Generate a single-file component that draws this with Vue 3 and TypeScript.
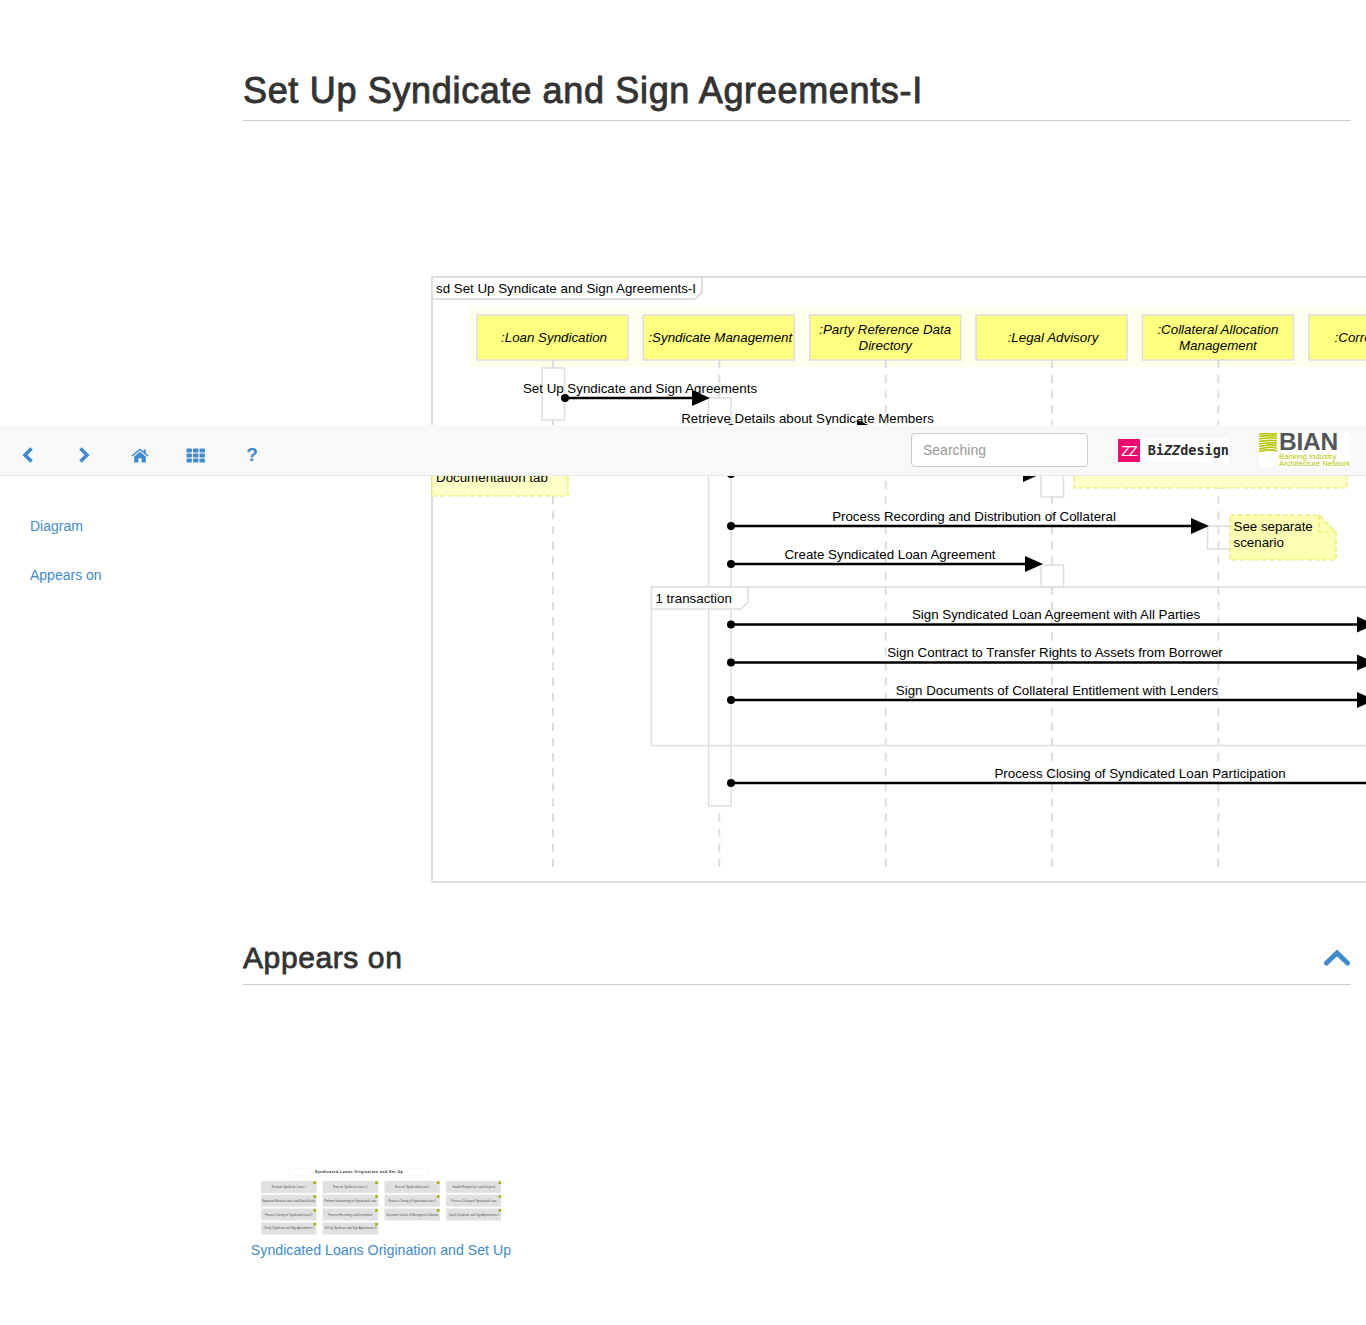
<script setup lang="ts">
const navIcons = ['left', 'right', 'home', 'grid', 'help']

const lifelines = [
  { x: 477, lines: [':Loan Syndication'] },
  { x: 643.3, lines: [':Syndicate Management'] },
  { x: 809.7, lines: [':Party Reference Data', 'Directory'] },
  { x: 976, lines: [':Legal Advisory'] },
  { x: 1142.4, lines: [':Collateral Allocation', 'Management'] },
  { x: 1308.7, lines: [':Correspondence'] }
]

const activations = [
  { x: 542, y: 368, h: 52 },
  { x: 708.5, y: 398, h: 408 },
  { x: 1041, y: 465, h: 32 },
  { x: 1041, y: 565, h: 22 }
]

const messages = [
  { x1: 565, x2: 710, y: 398, label: 'Set Up Syndicate and Sign Agreements', cx: 640 },
  { x1: 731, x2: 875, y: 428, label: 'Retrieve Details about Syndicate Members', cx: 807.5 },
  { x1: 731, x2: 1041, y: 474, label: '', cx: 0 },
  { x1: 731, x2: 1209, y: 526, label: 'Process Recording and Distribution of Collateral', cx: 974 },
  { x1: 731, x2: 1043, y: 564, label: 'Create Syndicated Loan Agreement', cx: 890 },
  { x1: 731, x2: 1375, y: 624.5, label: 'Sign Syndicated Loan Agreement with All Parties', cx: 1056 },
  { x1: 731, x2: 1375, y: 662.5, label: 'Sign Contract to Transfer Rights to Assets from Borrower', cx: 1055 },
  { x1: 731, x2: 1375, y: 700, label: 'Sign Documents of Collateral Entitlement with Lenders', cx: 1057 },
  { x1: 731, x2: 1400, y: 783, label: 'Process Closing of Syndicated Loan Participation', cx: 1140 }
]

const thumbCols = [
  ['Evaluate Syndicate Loans I', 'Negotiate Materials with Lead Bank Details', 'Process Closing of Syndicated Loan II', 'Clarify Syndicate and Sign Agreements-I'],
  ['Execute Syndicate Loan I-II', 'Perform Underwriting for Syndicated Loan', 'Process Recording and Distribution', 'Set Up Syndicate and Sign Agreements-II'],
  ['Execute Syndicated Loan II', 'Process Closing of Syndicated Loan II', 'Document Details of Mortgaged Collateral'],
  ['Handle Request for Loan Disposal', 'Process Closing of Syndicated Loan', 'Clarify Syndicate and Sign Agreements-I']
]
</script>

<template>
  <div class="page">
    <header class="topbar">
      <nav class="nav-icons">
        <a v-for="icon in navIcons" :key="icon" class="nav-icon">
          <svg v-if="icon === 'left'" width="12" height="16" viewBox="0 0 12 16">
            <path d="M9.500 1.500 L3 8 L9.500 14.500" fill="none" stroke="#428bca" stroke-width="3.600" />
          </svg>
          <svg v-else-if="icon === 'right'" width="12" height="16" viewBox="0 0 12 16">
            <path d="M2.500 1.500 L9 8 L2.500 14.500" fill="none" stroke="#428bca" stroke-width="3.600" />
          </svg>
          <svg v-else-if="icon === 'home'" width="18" height="15" viewBox="0 0 18 15">
            <path d="M0.400 7.600 L9 0.600 L12.600 3.500 V1.400 H14.800 V5.300 L17.600 7.600 L16.600 8.600 L9 2.600 L1.400 8.600 Z" fill="#428bca" />
            <path d="M3.200 8.400 L9 3.800 L14.800 8.400 V14.600 H10.600 V10.200 H7.400 V14.600 H3.200 Z" fill="#428bca" />
          </svg>
          <svg v-else-if="icon === 'grid'" width="20" height="15" viewBox="0 0 20 15">
            <g fill="#428bca">
              <rect x="0.500" y="0.500" width="5.400" height="4" rx="0.800" />
              <rect x="7" y="0.500" width="5.400" height="4" rx="0.800" />
              <rect x="13.500" y="0.500" width="5.400" height="4" rx="0.800" />
              <rect x="0.500" y="5.500" width="5.400" height="4" rx="0.800" />
              <rect x="7" y="5.500" width="5.400" height="4" rx="0.800" />
              <rect x="13.500" y="5.500" width="5.400" height="4" rx="0.800" />
              <rect x="0.500" y="10.500" width="5.400" height="4" rx="0.800" />
              <rect x="7" y="10.500" width="5.400" height="4" rx="0.800" />
              <rect x="13.500" y="10.500" width="5.400" height="4" rx="0.800" />
            </g>
          </svg>
          <span v-else class="help-mark">?</span>
        </a>
      </nav>
      <div class="search-box">Searching</div>
      <div class="logo-bizz">
        <span class="bizz-mark">ZZ</span>
        <span class="bizz-name">Bi<i>ZZ</i>design</span>
      </div>
      <div class="logo-bian">
        <svg class="bian-waves" width="18" height="19" viewBox="0 0 18 19">
          <g fill="none" stroke="#b5c400" stroke-width="1.600">
            <path d="M0 1 C6 0.500 12 0.500 18 1" />
            <path d="M0 3.500 C7 2.500 13 2.500 18 3" />
            <path d="M0 6 C5 5.500 12 3.500 18 5.500" />
            <path d="M0 8.500 C6 8 12 6 18 8" />
            <path d="M0 11 C6 11 11 8 18 10.500" />
            <path d="M0 13.500 C5 13.500 11 10 18 13" />
            <path d="M0 16 C5 16 10 12 18 15.500" />
            <path d="M0 18.500 C5 18 9 15 18 18" />
          </g>
        </svg>
        <div class="bian-text">
          <div class="bian-name">BIAN</div>
          <div class="bian-sub">Banking Industry<br />Architecture Network</div>
        </div>
      </div>
    </header>

    <aside class="sidebar">
      <a class="side-link">Diagram</a>
      <a class="side-link">Appears on</a>
    </aside>

    <main class="content">
      <h1 class="page-title">Set Up Syndicate and Sign Agreements-I</h1>

      <svg class="diagram" width="935" height="608" viewBox="431 276 935 608">
        <rect x="432" y="277" width="1000" height="605" fill="#fff" stroke="#ddd" stroke-width="2" />

        <g v-for="l in lifelines" :key="l.x">
          <rect :x="l.x - 7" y="307" width="166" height="60" fill="#ffffee" />
          <line :x1="l.x + 76" y1="360" :x2="l.x + 76" y2="867" stroke="#ddd" stroke-width="2" stroke-dasharray="8 7.120" />
        </g>
        <path d="M432 277 H702 V292 L695 299 H432 Z" fill="#fff" stroke="#ddd" stroke-width="2" />
        <text x="436" y="293" class="msg">sd Set Up Syndicate and Sign Agreements-I</text>
        <g v-for="l in lifelines" :key="'box' + l.x">
          <rect :x="l.x" y="315" width="151" height="45" fill="#ffff80" stroke="#ddd" stroke-width="1.500" />
          <text v-if="l.lines.length === 1" :x="l.x + 77" y="342" class="msg life">{{ l.lines[0] }}</text>
          <template v-else>
            <text :x="l.x + 75.500" y="334" class="msg life">{{ l.lines[0] }}</text>
            <text :x="l.x + 75.500" y="350" class="msg life">{{ l.lines[1] }}</text>
          </template>
        </g>

        <rect v-for="a in activations" :key="a.y" :x="a.x" :y="a.y" width="22.500" :height="a.h" fill="#fff" stroke="#ddd" stroke-width="1.500" />

        <path d="M651.500 587 H1400 V745.500 H651.500 Z" fill="none" stroke="#ddd" stroke-width="1.500" />
        <path d="M651.500 587 H748 V602 L741 609 H651.500 Z" fill="#fff" stroke="#ddd" stroke-width="1.500" />
        <text x="655.500" y="603" class="msg">1 transaction</text>

        <path d="M1207.500 526 H1230 M1207.500 526 V549 H1230" fill="none" stroke="#ddd" stroke-width="1.500" />

        <g v-for="m in messages" :key="m.y">
          <line :x1="m.x1" :y1="m.y" :x2="m.x2 - 10" :y2="m.y" stroke="#000" stroke-width="2.600" />
          <circle :cx="m.x1" :cy="m.y" r="4" fill="#000" />
          <path :d="`M${m.x2} ${m.y} L${m.x2 - 18} ${m.y - 8} V${m.y + 8} Z`" fill="#000" />
          <text v-if="m.label" :x="m.cx" :y="Math.floor(m.y) - 5" class="msg mid">{{ m.label }}</text>
        </g>

        <path d="M432 440 H568 V496 H432 Z" fill="#ffffc8" stroke="#e4e460" stroke-width="1.200" stroke-dasharray="5 2.500" />
        <text x="436" y="482" class="msg">Documentation tab</text>
        <path d="M1074 440 H1347 V488 H1074 Z" fill="#ffffc8" stroke="#e4e460" stroke-width="1.200" stroke-dasharray="5 2.500" />
        <path d="M1230 515 H1319 L1336 532 V560 H1230 Z" fill="#ffffb4" stroke="#e4e460" stroke-width="1.200" stroke-dasharray="5 2.500" />
        <path d="M1319 515 V532 H1336" fill="none" stroke="#e4e460" stroke-width="1.200" stroke-dasharray="5 2.500" />
        <text x="1233.500" y="531" class="msg">See separate</text>
        <text x="1233.500" y="547" class="msg">scenario</text>
      </svg>

      <div class="section-head">
        <h2 class="section-title">Appears on</h2>
        <svg width="28" height="18" viewBox="0 0 28 18">
          <path d="M3.500 14 L14 4 L24.500 14" fill="none" stroke="#428bca" stroke-width="5" stroke-linecap="round" />
        </svg>
      </div>

      <figure class="thumb">
        <svg width="240" height="67" viewBox="261 1168 240 67">
          <rect x="289" y="1168" width="140" height="8" fill="#fff" stroke="#f0f0f0" stroke-width="0.600" />
          <text x="359" y="1172.500" class="thumb-title">Syndicated Loans Origination and Set Up</text>
          <g v-for="(col, c) in thumbCols" :key="c">
            <g v-for="(cell, r) in col" :key="cell + r">
              <rect :x="261 + c * 61.700" :y="1181 + r * 13.800" width="55.500" height="12" fill="#e0e0e0" stroke="#eee" stroke-width="0.600" />
              <rect :x="313.500 + c * 61.700" :y="1181.500 + r * 13.800" width="2.500" height="2.500" fill="#a8a800" />
              <text :x="288.700 + c * 61.700" :y="1188 + r * 13.800" class="thumb-cell">{{ cell }}</text>
            </g>
          </g>
        </svg>
        <figcaption class="thumb-label">Syndicated Loans Origination and Set Up</figcaption>
      </figure>
    </main>
  </div>
</template>

<style scoped>
.page {
  position: relative;
  display: grid;
  grid-template-columns: 243px 1fr;
  height: 1325px;
  overflow: hidden;
  background: #fff;
  color: #333;
  font-family: "Liberation Sans", Arial, sans-serif;
  font-size: 14px;
}
.topbar {
  position: absolute;
  top: 425px;
  left: 0;
  right: 0;
  z-index: 5;
  display: flex;
  align-items: center;
  height: 50px;
  box-sizing: content-box;
  background: #f8f8f8;
  border-bottom: 1px solid #e7e7e7;
}
.nav-icons {
  display: flex;
  align-items: center;
  width: 911px;
  padding: 10px 0 0 22px;
  box-sizing: border-box;
  gap: 44px;
}
.nav-icon {
  display: flex;
  align-items: center;
  justify-content: center;
  width: 12px;
  height: 20px;
  color: #428bca;
}
.nav-icon svg {
  flex: none;
}
.help-mark {
  font-size: 19px;
  font-weight: 700;
  color: #428bca;
}
.search-box {
  width: 177px;
  height: 34px;
  box-sizing: border-box;
  padding: 0 11px;
  margin-top: -1px;
  line-height: 32px;
  background: #fff;
  border: 1px solid #ccc;
  border-radius: 4px;
  color: #999;
  font-size: 14px;
}
.logo-bizz {
  display: flex;
  align-items: center;
  gap: 8px;
  width: 111px;
  height: 25px;
  margin-left: 30px;
  background: #fff;
}
.bizz-mark {
  width: 22px;
  height: 23px;
  background: #ee0a6e;
  color: #fff;
  font-size: 15px;
  line-height: 23px;
  text-align: center;
  letter-spacing: -1.500px;
}
.bizz-name {
  font-family: "DejaVu Sans Mono", monospace;
  font-size: 13.500px;
  font-weight: 700;
  color: #2b2b2b;
}
.logo-bian {
  display: flex;
  width: 92px;
  height: 34px;
  margin-left: 30px;
  background: #fff;
}
.bian-waves {
  flex: none;
  margin-right: 2px;
}
.bian-name {
  margin-top: -1px;
  font-size: 24.500px;
  line-height: 20px;
  font-weight: 700;
  letter-spacing: -0.200px;
  color: #55565a;
}
.bian-sub {
  margin-top: 1px;
  font-size: 7.700px;
  line-height: 7px;
  color: #b5c400;
  white-space: nowrap;
}
.sidebar {
  display: flex;
  flex-direction: column;
  gap: 32px;
  padding: 518px 0 0 30px;
}
.side-link {
  color: #428bca;
  font-size: 14px;
  line-height: 17px;
}
.content {
  min-width: 0;
}
.page-title {
  margin: 70px 15px 0 0;
  padding-bottom: 8px;
  border-bottom: 1px solid #ccc;
  font-size: 36px;
  line-height: 42px;
  font-weight: 400;
  letter-spacing: 0.670px;
  -webkit-text-stroke: 0.900px #333;
}
.diagram {
  display: block;
  margin: 155px 0 0 188px;
}
.msg {
  font-size: 13.330px;
  font-family: "Liberation Sans", Arial, sans-serif;
  fill: #000;
}
.mid {
  text-anchor: middle;
}
.life {
  font-style: italic;
  text-anchor: middle;
}
.section-head {
  display: flex;
  align-items: center;
  justify-content: space-between;
  margin: 56px 15px 0 0;
  padding-bottom: 8px;
  border-bottom: 1px solid #ccc;
}
.section-title {
  margin: 0;
  font-size: 30px;
  line-height: 36px;
  font-weight: 400;
  letter-spacing: 0.600px;
  -webkit-text-stroke: 0.800px #333;
}
.thumb {
  width: 280px;
  margin: 183px 0 0 -2px;
  text-align: center;
}
.thumb svg {
  display: block;
  margin-left: 20px;
}
.thumb-title {
  font-size: 3.600px;
  font-weight: 700;
  text-anchor: middle;
  letter-spacing: 0.450px;
  fill: #222;
}
.thumb-cell {
  font-size: 2.800px;
  text-anchor: middle;
  fill: #555;
}
.thumb-label {
  margin-top: 5px;
  color: #428bca;
  font-size: 14.200px;
  line-height: 20px;
  white-space: nowrap;
}
</style>

<style>
body {
  margin: 0;
}
</style>
